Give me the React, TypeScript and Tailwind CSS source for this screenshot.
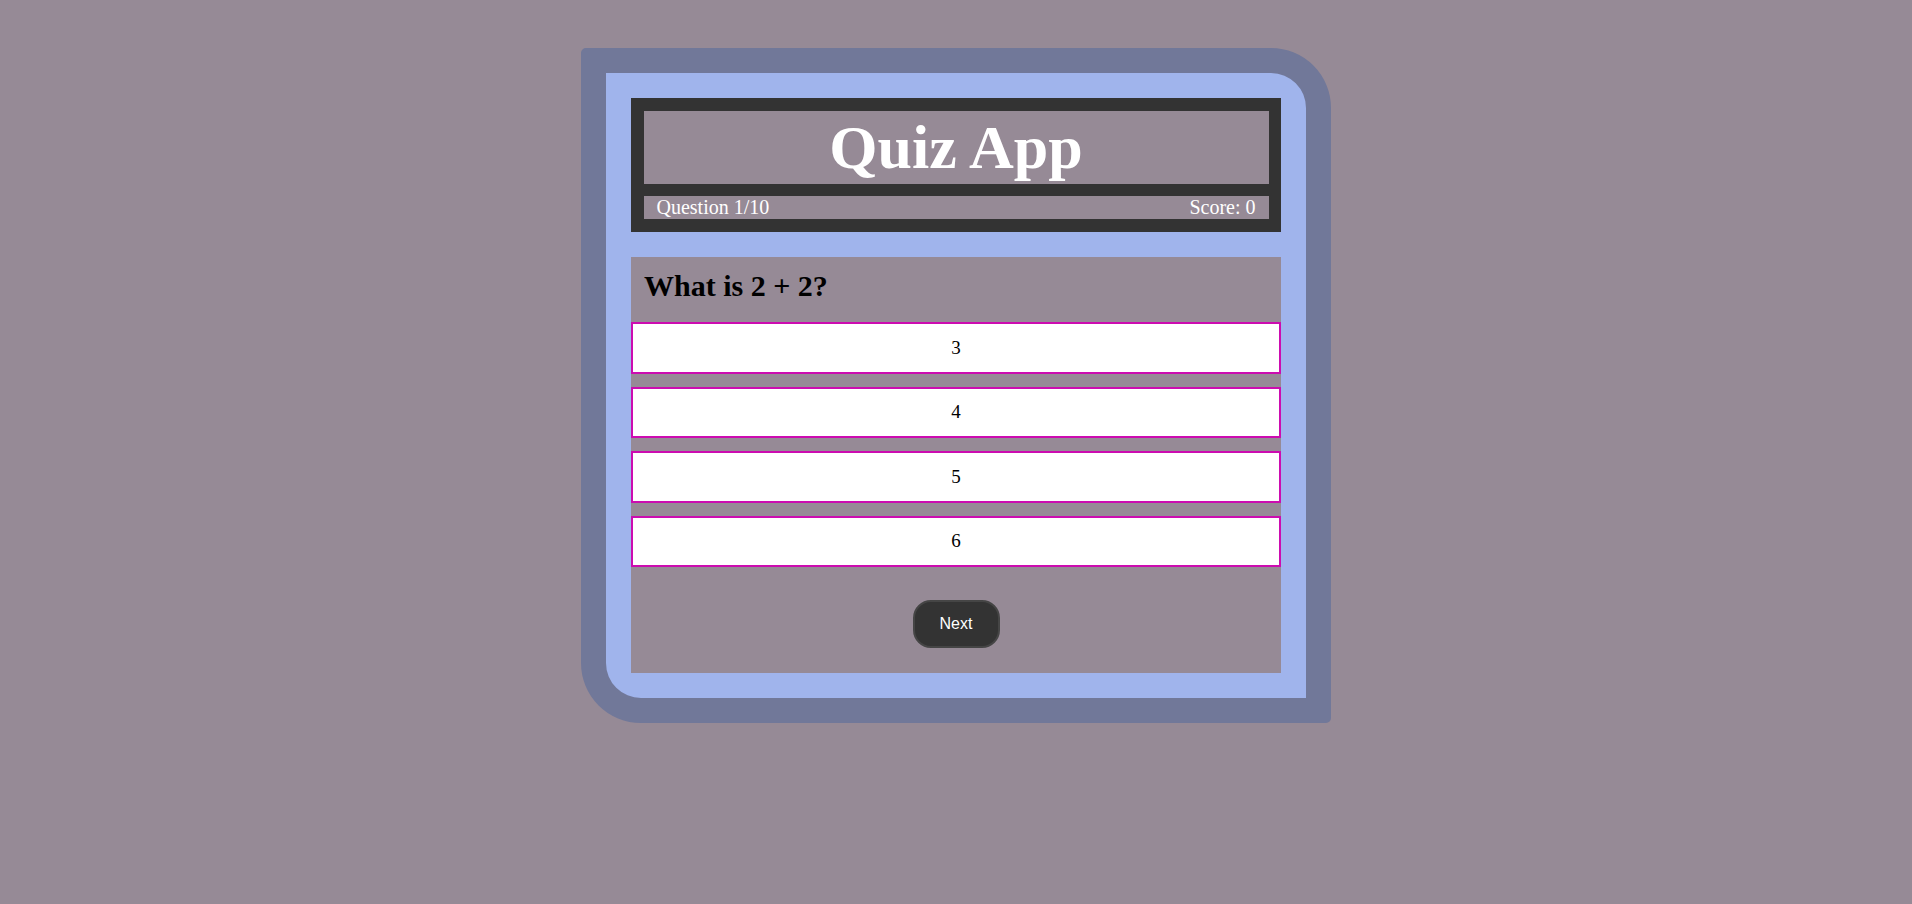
const options = ["3", "4", "5", "6"];

export default function App() {
  return (
    <div className="min-h-[904px] w-full bg-[#968a96] pt-[48px] font-['Liberation_Serif',serif]">
      <div className="mx-auto w-[750px] border-[25px] border-[#717899] bg-[#a0b4ec] p-[25px] rounded-tl-[5px] rounded-br-[5px] rounded-tr-[60px] rounded-bl-[60px]">
        {/* Header */}
        <div className="flex flex-col gap-[12px] bg-[#333333] px-[12.5px] py-[13px]">
          <h1 className="h-[73px] bg-[#968a96] text-center text-[62px] font-bold leading-[73px] text-white">
            Quiz App
          </h1>
          <div className="flex h-[23px] items-center justify-between bg-[#968a96] px-[13px] text-[20px] leading-[23px] text-white">
            <span>Question 1/10</span>
            <span>Score: 0</span>
          </div>
        </div>

        {/* Question */}
        <div className="mt-[25px] bg-[#968a96] pt-[13px] pb-[25px]">
          <h2 className="mb-[20px] px-[13px] text-[30px] font-bold leading-[32px] text-black">
            What is 2 + 2?
          </h2>
          <div className="flex flex-col gap-[13px]">
            {options.map((o) => (
              <button
                key={o}
                className="flex h-[51.5px] w-full items-center justify-center border-2 border-[#cc0cb0] bg-white text-[19px] text-black"
              >
                {o}
              </button>
            ))}
          </div>
          <div className="mt-[33px] flex justify-center">
            <button className="flex h-[48px] w-[87px] items-center justify-center rounded-[18px] border-2 border-[#454545] bg-[#333333] font-['Liberation_Sans',Arial,sans-serif] text-[16px] text-white">
              Next
            </button>
          </div>
        </div>
      </div>
    </div>
  );
}
